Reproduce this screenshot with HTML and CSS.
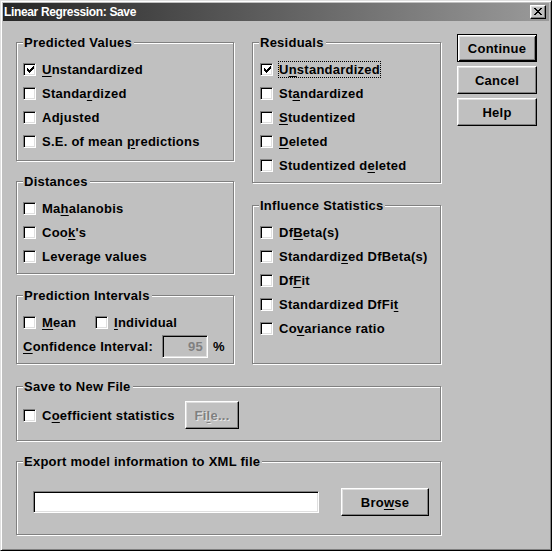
FILE: index.html
```html
<!DOCTYPE html>
<html>
<head>
<meta charset="utf-8">
<title>Linear Regression: Save</title>
<link rel="stylesheet" href="styles.css">
</head>
<body>
<div class="window">
  <div class="titlebar">
    <span class="title">Linear Regression: Save</span>
    <span class="close-btn"><svg width="8" height="7" viewBox="0 0 8 7" shape-rendering="crispEdges"><path fill="#000" d="M0 0h2v1H0z M6 0h2v1H6z M1 1h2v1H1z M5 1h2v1H5z M2 2h4v1H2z M3 3h2v1H3z M2 4h4v1H2z M1 5h2v1H1z M5 5h2v1H5z M0 6h2v1H0z M6 6h2v1H6z"/></svg></span>
  </div>
  <div class="client">
    <div class="top">
      <div class="col col-left">
        <div class="group g-pred">
          <span class="legend">Predicted Values</span>
          <div class="check"><span class="box on"><svg width="7" height="7" viewBox="0 0 7 7" shape-rendering="crispEdges"><path fill="#000" d="M6 0h1v1H6z M5 1h2v1H5z M0 2h1v1H0z M4 2h3v1H4z M0 3h2v1H0z M3 3h3v1H3z M0 4h5v1H0z M1 5h3v1H1z M2 6h1v1H2z"/></svg></span><span class="lbl"><u>U</u>nstandardized</span></div>
          <div class="check"><span class="box"></span><span class="lbl">Standa<u>r</u>dized</span></div>
          <div class="check"><span class="box"></span><span class="lbl">Adjusted</span></div>
          <div class="check"><span class="box"></span><span class="lbl">S.E. of mean <u>p</u>redictions</span></div>
        </div>
        <div class="group g-dist">
          <span class="legend">Distances</span>
          <div class="check"><span class="box"></span><span class="lbl">Ma<u>h</u>alanobis</span></div>
          <div class="check"><span class="box"></span><span class="lbl">Coo<u>k</u>'s</span></div>
          <div class="check"><span class="box"></span><span class="lbl">Leverage values</span></div>
        </div>
        <div class="group g-pi">
          <span class="legend">Prediction Intervals</span>
          <div class="row">
            <div class="check pi-mean"><span class="box"></span><span class="lbl"><u>M</u>ean</span></div>
            <div class="check"><span class="box"></span><span class="lbl"><u>I</u>ndividual</span></div>
          </div>
          <div class="row">
            <span class="ci-label"><u>C</u>onfidence Interval:</span>
            <span class="field disabled">95</span>
            <span class="pct">%</span>
          </div>
        </div>
      </div>
      <div class="col col-mid">
        <div class="group r g-res">
          <span class="legend">Residuals</span>
          <div class="check"><span class="box on"><svg width="7" height="7" viewBox="0 0 7 7" shape-rendering="crispEdges"><path fill="#000" d="M6 0h1v1H6z M5 1h2v1H5z M0 2h1v1H0z M4 2h3v1H4z M0 3h2v1H0z M3 3h3v1H3z M0 4h5v1H0z M1 5h3v1H1z M2 6h1v1H2z"/></svg></span><span class="lbl focus">U<u>n</u>standardized</span></div>
          <div class="check"><span class="box"></span><span class="lbl">St<u>a</u>ndardized</span></div>
          <div class="check"><span class="box"></span><span class="lbl"><u>S</u>tudentized</span></div>
          <div class="check"><span class="box"></span><span class="lbl"><u>D</u>eleted</span></div>
          <div class="check"><span class="box"></span><span class="lbl">Studentized d<u>e</u>leted</span></div>
        </div>
        <div class="group r g-inf">
          <span class="legend">Influence Statistics</span>
          <div class="check"><span class="box"></span><span class="lbl">Df<u>B</u>eta(s)</span></div>
          <div class="check"><span class="box"></span><span class="lbl">Standardi<u>z</u>ed DfBeta(s)</span></div>
          <div class="check"><span class="box"></span><span class="lbl">Df<u>F</u>it</span></div>
          <div class="check"><span class="box"></span><span class="lbl">Standardized DfFi<u>t</u></span></div>
          <div class="check"><span class="box"></span><span class="lbl">Co<u>v</u>ariance ratio</span></div>
        </div>
      </div>
      <div class="buttons">
        <span class="btn default">Continue</span>
        <span class="btn">Cancel</span>
        <span class="btn">Help</span>
      </div>
    </div>
    <div class="group g-save">
      <span class="legend">Save to New File</span>
      <div class="row row-save">
        <div class="check coef"><span class="box"></span><span class="lbl">C<u>o</u>efficient statistics</span></div>
        <span class="btn btn-file disabled-text">Fi<u>l</u>e...</span>
      </div>
    </div>
    <div class="group g-xml">
      <span class="legend">Export model information to XML file</span>
      <div class="row row-xml">
        <span class="field xml-field"></span>
        <span class="btn btn-browse">Bro<u>w</u>se</span>
      </div>
    </div>
  </div>
</div>
</body>
</html>
```

FILE: styles.css
```css
* { box-sizing: border-box; }
html, body { margin: 0; padding: 0; background: #c0c0c0; }
body {
  font-family: "Liberation Sans", Arial, sans-serif;
  font-size: 13px;
  font-weight: bold;
  letter-spacing: 0.25px;
  color: #000;
  line-height: 15px;
}
.window {
  width: 552px;
  height: 551px;
  border: 1px solid;
  border-color: #dfdfdf #000 #000 #dfdfdf;
  box-shadow: inset 1px 1px 0 #fff, inset -1px -1px 0 #808080;
  padding: 2px;
  background: #c0c0c0;
  display: flex;
  flex-direction: column;
}
.titlebar {
  height: 18px;
  flex: none;
  display: flex;
  align-items: center;
  justify-content: space-between;
  background: linear-gradient(90deg, #262626 0%, #5a5a5a 45%, #9a9a9a 100%);
  padding: 0 3px 0 1px;
  color: #fff;
}
.title { font-size: 12px; letter-spacing: -0.35px; }
.close-btn {
  width: 16px;
  height: 14px;
  border: 1px solid;
  border-color: #fff #000 #000 #fff;
  box-shadow: inset -1px -1px 0 #808080, inset 1px 1px 0 #dfdfdf;
  background: #c0c0c0;
  display: flex;
  align-items: center;
  justify-content: center;
  margin-top: -1px;
}
.close-btn svg { display: block; }
.client {
  flex: 1;
  padding: 13px 0 0 13px;
  display: flex;
  flex-direction: column;
}
.top { display: flex; align-items: flex-start; }
.col { display: flex; flex-direction: column; margin-top: 8px; }
.col-left { width: 218px; }
.col-mid { width: 189px; margin-left: 18px; }
.buttons {
  width: 80px;
  margin-left: 16px;
  display: flex;
  flex-direction: column;
  gap: 4px;
}
.group {
  position: relative;
  border: 1px solid #808080;
  box-shadow: inset 1px 1px 0 #fff, 1px 1px 0 #fff;
  padding: 14px 4px 0 6px;
}
.group.r { padding-left: 7px; }
.legend {
  position: absolute;
  top: -8px;
  left: 6px;
  padding: 0 2px 0 1px;
  background: #c0c0c0;
  white-space: nowrap;
}
.g-pred { height: 119px; }
.g-dist { height: 93px; margin-top: 20px; }
.g-pi { height: 69px; margin-top: 21px; }
.g-res { height: 141px; }
.g-inf { height: 159px; margin-top: 22px; }
.g-save { width: 425px; height: 55px; margin-top: 22px; }
.g-xml { width: 425px; height: 74px; margin-top: 20px; padding-top: 26px; padding-left: 16px; }
.check { display: flex; align-items: center; height: 24px; white-space: nowrap; }
.box {
  width: 13px;
  height: 13px;
  flex: none;
  margin-right: 6px;
  background: #fff;
  border: 1px solid;
  border-color: #808080 #fff #fff #808080;
  box-shadow: inset 1px 1px 0 #000, inset -1px -1px 0 #dfdfdf;
  display: flex;
  align-items: center;
  justify-content: center;
  padding: 1px 0 0 1px;
}
.box svg { display: block; }
.lbl u, .btn u, .ci-label u { text-decoration: underline; text-underline-offset: 2px; }
.focus { outline: 1px dotted #000; outline-offset: 0; }
.row { display: flex; align-items: center; height: 24px; }
.pi-mean { width: 72px; }
.ci-label { width: 139px; flex: none; white-space: nowrap; }
.field {
  display: block;
  border: 1px solid;
  border-color: #808080 #fff #fff #808080;
  box-shadow: inset 1px 1px 0 #000, inset -1px -1px 0 #dfdfdf;
}
.field.disabled {
  width: 46px;
  height: 23px;
  background: #c0c0c0;
  color: #808080;
  text-align: right;
  padding: 3px 4px 0 0;
}
.pct { margin-left: 5px; }
.btn {
  display: flex;
  align-items: center;
  justify-content: center;
  height: 28px;
  background: #c0c0c0;
  border: 1px solid;
  border-color: #fff #000 #000 #fff;
  box-shadow: inset -1px -1px 0 #808080, inset 1px 1px 0 #dfdfdf;
  white-space: nowrap;
}
.btn.default {
  border-color: #000;
  box-shadow: inset 1px 1px 0 #fff, inset -1px -1px 0 #000, inset 2px 2px 0 #dfdfdf, inset -2px -2px 0 #808080;
}
.row-save { height: 28px; }
.coef { width: 162px; }
.btn-file { width: 54px; }
.disabled-text { color: #808080; text-shadow: 1px 1px 0 #e8e8e8; }
.row-xml { height: 28px; }
.xml-field { width: 286px; height: 22px; background: #fff; }
.btn-browse { width: 88px; margin-left: 22px; }
```
